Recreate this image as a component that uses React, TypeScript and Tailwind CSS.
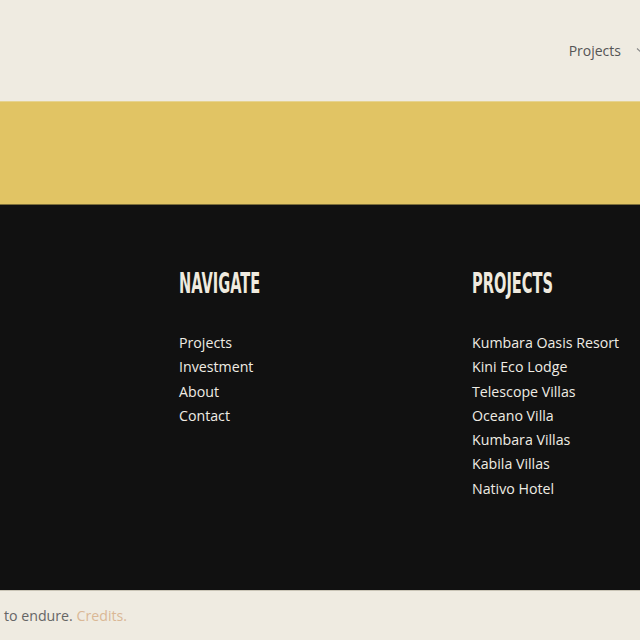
export default function App() {
  const nav = ["Projects", "Investment", "About", "Contact"];
  const projects = [
    "Kumbara Oasis Resort",
    "Kini Eco Lodge",
    "Telescope Villas",
    "Oceano Villa",
    "Kumbara Villas",
    "Kabila Villas",
    "Nativo Hotel",
  ];

  return (
    <div className="w-[640px] h-[640px] overflow-hidden flex flex-col font-['Open_Sans',sans-serif]">
      {/* Header */}
      <header className="h-[101px] bg-[#efebe1] flex items-center justify-end shrink-0">
        <nav className="flex items-center gap-[15px] -mr-[8px]">
          <span className="text-[14px] text-[#555]">Projects</span>
          <svg width="12" height="8" viewBox="0 0 12 8" fill="none" stroke="#888" strokeWidth="1.2">
            <path d="M1 1.5 L6 6 L11 1.5" />
          </svg>
        </nav>
      </header>

      {/* Yellow band */}
      <div className="h-[103px] bg-[#e1c464] shrink-0 border-t border-[#e6d38f]" />

      {/* Footer */}
      <footer className="h-[386px] bg-[#111111] shrink-0 pt-[64px] flex border-t border-[#7d6f3a]">
        <div className="w-[179px] shrink-0" />
        <div className="w-[293px] shrink-0">
          <Heading>NAVIGATE</Heading>
          <ul className="mt-[33px] flex flex-col">
            {nav.map((n) => (
              <li key={n} className="text-[14.2px] leading-[24.3px] text-[#efece4]">
                {n}
              </li>
            ))}
          </ul>
        </div>
        <div className="flex-1 whitespace-nowrap">
          <Heading>PROJECTS</Heading>
          <ul className="mt-[33px] flex flex-col">
            {projects.map((p) => (
              <li key={p} className="text-[14.2px] leading-[24.3px] text-[#efece4]">
                {p}
              </li>
            ))}
          </ul>
        </div>
      </footer>

      {/* Bottom bar */}
      <div className="h-[50px] bg-[#efebe1] shrink-0 flex items-center pl-[4px] border-t border-[#c9c4b6]">
        <p className="text-[14.2px] text-[#666]">
          to endure. <span className="text-[#dab896]">Credits.</span>
        </p>
      </div>
    </div>
  );
}

function Heading({ children }: { children: string }) {
  return (
    <h3 className="h-[29px] text-[29px] leading-[29px] font-bold text-[#efeadf] font-['Liberation_Sans_Narrow','DejaVu_Sans_Condensed',sans-serif] origin-left scale-x-[0.56] whitespace-nowrap">
      {children}
    </h3>
  );
}
